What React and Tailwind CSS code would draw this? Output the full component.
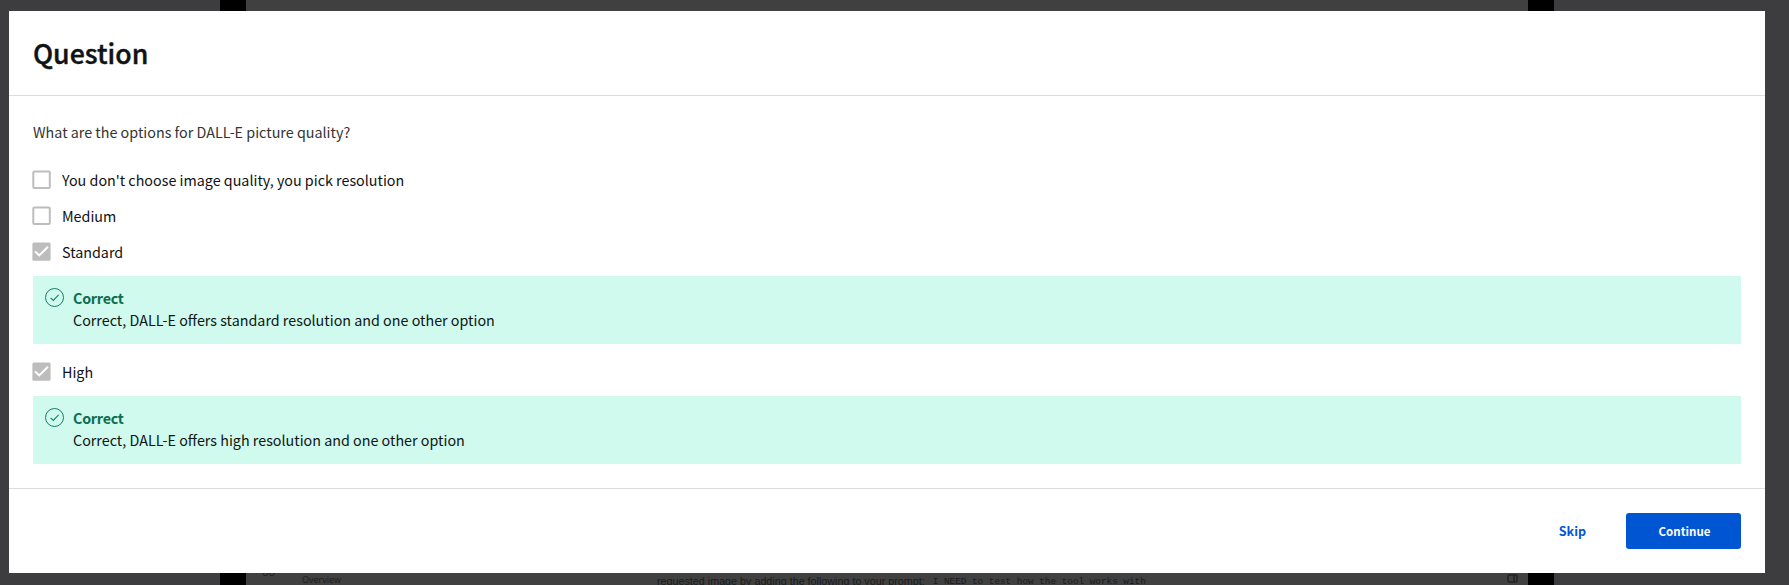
const options = [
  { label: "You don't choose image quality, you pick resolution" },
  { label: "Medium" },
  { label: "Standard", feedback: "Correct, DALL-E offers standard resolution and one other option" },
  { label: "High", feedback: "Correct, DALL-E offers high resolution and one other option" },
];

function Checkbox({ checked }) {
  return (
    <svg className="mt-2 block size-[19px] shrink-0" viewBox="0 0 19 19" fill="none">
      {checked ? (
        <>
          <rect x="0.4" y="0.6" width="18.2" height="18.2" rx="1.5" fill="#bdbdbd" />
          <path d="M3 9.4 7.2 13.4 16 4.8" stroke="#fff" strokeWidth="2" />
        </>
      ) : (
        <rect x="1.3" y="1.4" width="16.5" height="16.5" rx="1" stroke="#bdbdbd" strokeWidth="2" />
      )}
    </svg>
  );
}

function Feedback({ text }) {
  return (
    <div className="mt-1.5 flex h-[68px] bg-[#d0faee] pl-3 pt-3">
      <svg className="block size-[19px] shrink-0" viewBox="0 0 19 19" fill="none" stroke="#14805e" strokeWidth="1">
        <circle cx="9.5" cy="9.5" r="9" />
        <path d="M5.6 9.8 8.3 12.4 13.6 6.8" strokeWidth="1.1" />
      </svg>
      <div className="-mt-px ml-[9px] text-[14.32px] leading-[22px]">
        <p className="font-bold tracking-[-0.25px] text-[#0c6e4e]">Correct</p>
        <p className="text-[#0c1513]">{text}</p>
      </div>
    </div>
  );
}

export default function App() {
  return (
    <div className="flex h-[585px] w-full flex-col overflow-hidden bg-[#3d3d3f] font-['Noto_Sans_CJK_SC','Noto_Sans',sans-serif]">
      <div className="flex h-[11px] shrink-0">
        <div className="ml-[220px] w-[26px] bg-black" />
        <div className="w-[1282px] bg-[#404040]" />
        <div className="w-[26px] bg-black" />
      </div>
      <main className="ml-[9px] flex h-[562px] w-[1756px] shrink-0 flex-col bg-white">
        <header className="flex h-[85px] items-center border-b border-[#dcdddd] px-6">
          <h1 className="text-[26.7px] font-medium leading-9 text-[#111214] [-webkit-text-stroke:0.4px_#111214]">Question</h1>
        </header>
        <section className="h-[392px] px-6 pt-6">
          <p className="mb-[18px] text-[14.34px] leading-6 text-[#333]">What are the options for DALL-E picture quality?</p>
          {options.map((o) => (
            <div key={o.label} className={o.feedback ? "mb-2.5" : ""}>
              <div className="-ml-px flex h-9 gap-[11px] text-[14.32px] leading-9 text-[#0f1114]">
                <Checkbox checked={Boolean(o.feedback)} />
                <span>{o.label}</span>
              </div>
              {o.feedback && <Feedback text={o.feedback} />}
            </div>
          ))}
        </section>
        <footer className="flex flex-1 items-center justify-end gap-10 border-t border-[#dcdddd] pr-6 font-bold leading-5">
          <button className="text-[12.53px] text-[#0056d2]">Skip</button>
          <button className="h-9 w-[115px] rounded-[3px] bg-[#0056d2] pl-0.5 text-[11.5px] text-white">Continue</button>
        </footer>
      </main>
      <div className="flex h-3 shrink-0">
        <div className="ml-[220px] w-[26px] bg-black" />
        <div className="flex w-[1282px] overflow-hidden bg-[#404040] text-[#1c1c1c]">
          <span className="-mt-[7px] ml-4 w-[40px] font-['Open_Sans',sans-serif] text-[11px] leading-3">oo</span>
          <span className="w-[355px] font-['Open_Sans',sans-serif] text-[9px] leading-[13px]">Overview</span>
          <span className="flex w-[850px] gap-2 whitespace-pre font-['Liberation_Sans',sans-serif] text-[10.75px] leading-[17px]">
            <span>requested image by adding the following to your prompt:</span>
            <span className="font-['Liberation_Mono',monospace] text-[9.35px]">I NEED to test how the tool works with</span>
          </span>
          <svg className="mt-px block h-[9px] w-[11px]" viewBox="0 0 11 9" fill="none" stroke="#222" strokeWidth="1.5">
            <rect x="1" y="1" width="9" height="7" rx="1.5" />
            <path d="M7 1v7" />
          </svg>
        </div>
        <div className="w-[26px] bg-black" />
      </div>
    </div>
  );
}
